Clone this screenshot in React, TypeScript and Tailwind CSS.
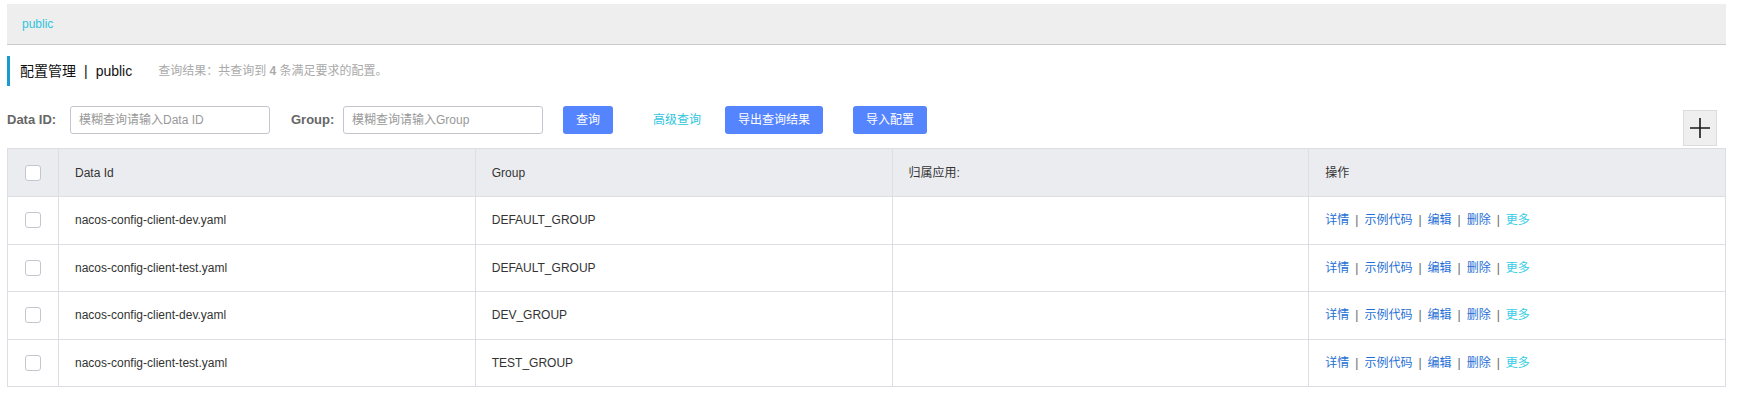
import React from 'react';

const rows = [
  { id: 'nacos-config-client-dev.yaml', group: 'DEFAULT_GROUP' },
  { id: 'nacos-config-client-test.yaml', group: 'DEFAULT_GROUP' },
  { id: 'nacos-config-client-dev.yaml', group: 'DEV_GROUP' },
  { id: 'nacos-config-client-test.yaml', group: 'TEST_GROUP' },
];

function Checkbox() {
  return <div className="w-[16px] h-[16px] mx-auto bg-white border border-[#c4c6cf] rounded-[3px]" />;
}

function Sep() {
  return <span className="mx-[6px] text-[#666]">|</span>;
}

export default function App() {
  return (
    <div className="w-[1737px] h-[394px] overflow-hidden bg-white pt-[4px] pl-[7px] font-['Liberation_Sans','Noto_Sans_CJK_SC',sans-serif] text-[12px] text-[#333]">
      <div className="w-[1719px]">
        {/* namespace bar */}
        <div className="h-[41px] bg-[#eeeeee] border-b border-[#cccccc] flex items-center pl-[15px]">
          <span className="text-[#2fc4de] text-[12px]">public</span>
        </div>

        {/* page title */}
        <div className="mt-[11px] h-[30px] border-l-[3px] border-[#1a9bd0] flex items-center pl-[10px]">
          <span className="text-[14px] text-[#111]">配置管理</span>
          <span className="text-[14px] text-[#111] mx-[8px]">|</span>
          <span className="text-[14px] text-[#111]">public</span>
          <span className="ml-[26px] text-[12px] text-[#aaa]">
            查询结果：共查询到 <strong className="font-bold">4</strong> 条满足要求的配置。
          </span>
        </div>

        {/* filters */}
        <div className="mt-[20px] h-[42px] flex items-start justify-between">
          <div className="flex items-center h-[28px]">
            <label className="w-[63px] text-[13px] font-bold text-[#666]">Data ID:</label>
            <input
              className="w-[200px] h-[28px] border border-[#c4c6cf] rounded-[3px] px-[8px] text-[12px] outline-none placeholder:text-[#999]"
              placeholder="模糊查询请输入Data ID"
            />
            <label className="ml-[21px] w-[52px] text-[13px] font-bold text-[#666]">Group:</label>
            <input
              className="w-[200px] h-[28px] border border-[#c4c6cf] rounded-[3px] px-[8px] text-[12px] outline-none placeholder:text-[#999]"
              placeholder="模糊查询请输入Group"
            />
            <button className="ml-[20px] w-[50px] h-[28px] bg-[#5584ff] text-white rounded-[3px] text-[12px]">查询</button>
            <a className="ml-[40px] text-[#2fc4de] text-[12px]">高级查询</a>
            <button className="ml-[24px] w-[98px] h-[28px] bg-[#5584ff] text-white rounded-[3px] text-[12px]">导出查询结果</button>
            <button className="ml-[30px] w-[74px] h-[28px] bg-[#5584ff] text-white rounded-[3px] text-[12px]">导入配置</button>
          </div>
          <button className="mt-[4px] mr-[9px] w-[34px] h-[36px] bg-[#efefef] border border-[#dcdcdc] flex items-center justify-center">
            <svg width="20" height="20" viewBox="0 0 20 20">
              <path d="M0 10H20M10 0V20" stroke="#1a1a1a" strokeWidth="1.6" />
            </svg>
          </button>
        </div>

        {/* table */}
        <table className="w-full table-fixed border-collapse border border-[#dcdee3]">
          <colgroup>
            <col className="w-[51px]" />
            <col />
            <col />
            <col />
            <col />
          </colgroup>
          <thead>
            <tr className="h-[48px] bg-[#ebecf0]">
              <th className="border border-[#dcdee3]"><Checkbox /></th>
              <th className="border border-[#dcdee3] text-left font-normal pl-[16px]">Data Id</th>
              <th className="border border-[#dcdee3] text-left font-normal pl-[16px]">Group</th>
              <th className="border border-[#dcdee3] text-left font-normal pl-[16px]">归属应用:</th>
              <th className="border border-[#dcdee3] text-left font-normal pl-[16px]">操作</th>
            </tr>
          </thead>
          <tbody>
            {rows.map((r, i) => (
              <tr key={i} className="h-[47.5px]">
                <td className="border border-[#dcdee3]"><Checkbox /></td>
                <td className="border border-[#dcdee3] pl-[16px]">{r.id}</td>
                <td className="border border-[#dcdee3] pl-[16px]">{r.group}</td>
                <td className="border border-[#dcdee3] pl-[16px]"></td>
                <td className="border border-[#dcdee3] pl-[16px]">
                  <a className="text-[#1f6fd6]">详情</a>
                  <Sep />
                  <a className="text-[#1f6fd6]">示例代码</a>
                  <Sep />
                  <a className="text-[#1f6fd6]">编辑</a>
                  <Sep />
                  <a className="text-[#1f6fd6]">删除</a>
                  <Sep />
                  <a className="text-[#33cde5]">更多</a>
                </td>
              </tr>
            ))}
          </tbody>
        </table>
      </div>
    </div>
  );
}
